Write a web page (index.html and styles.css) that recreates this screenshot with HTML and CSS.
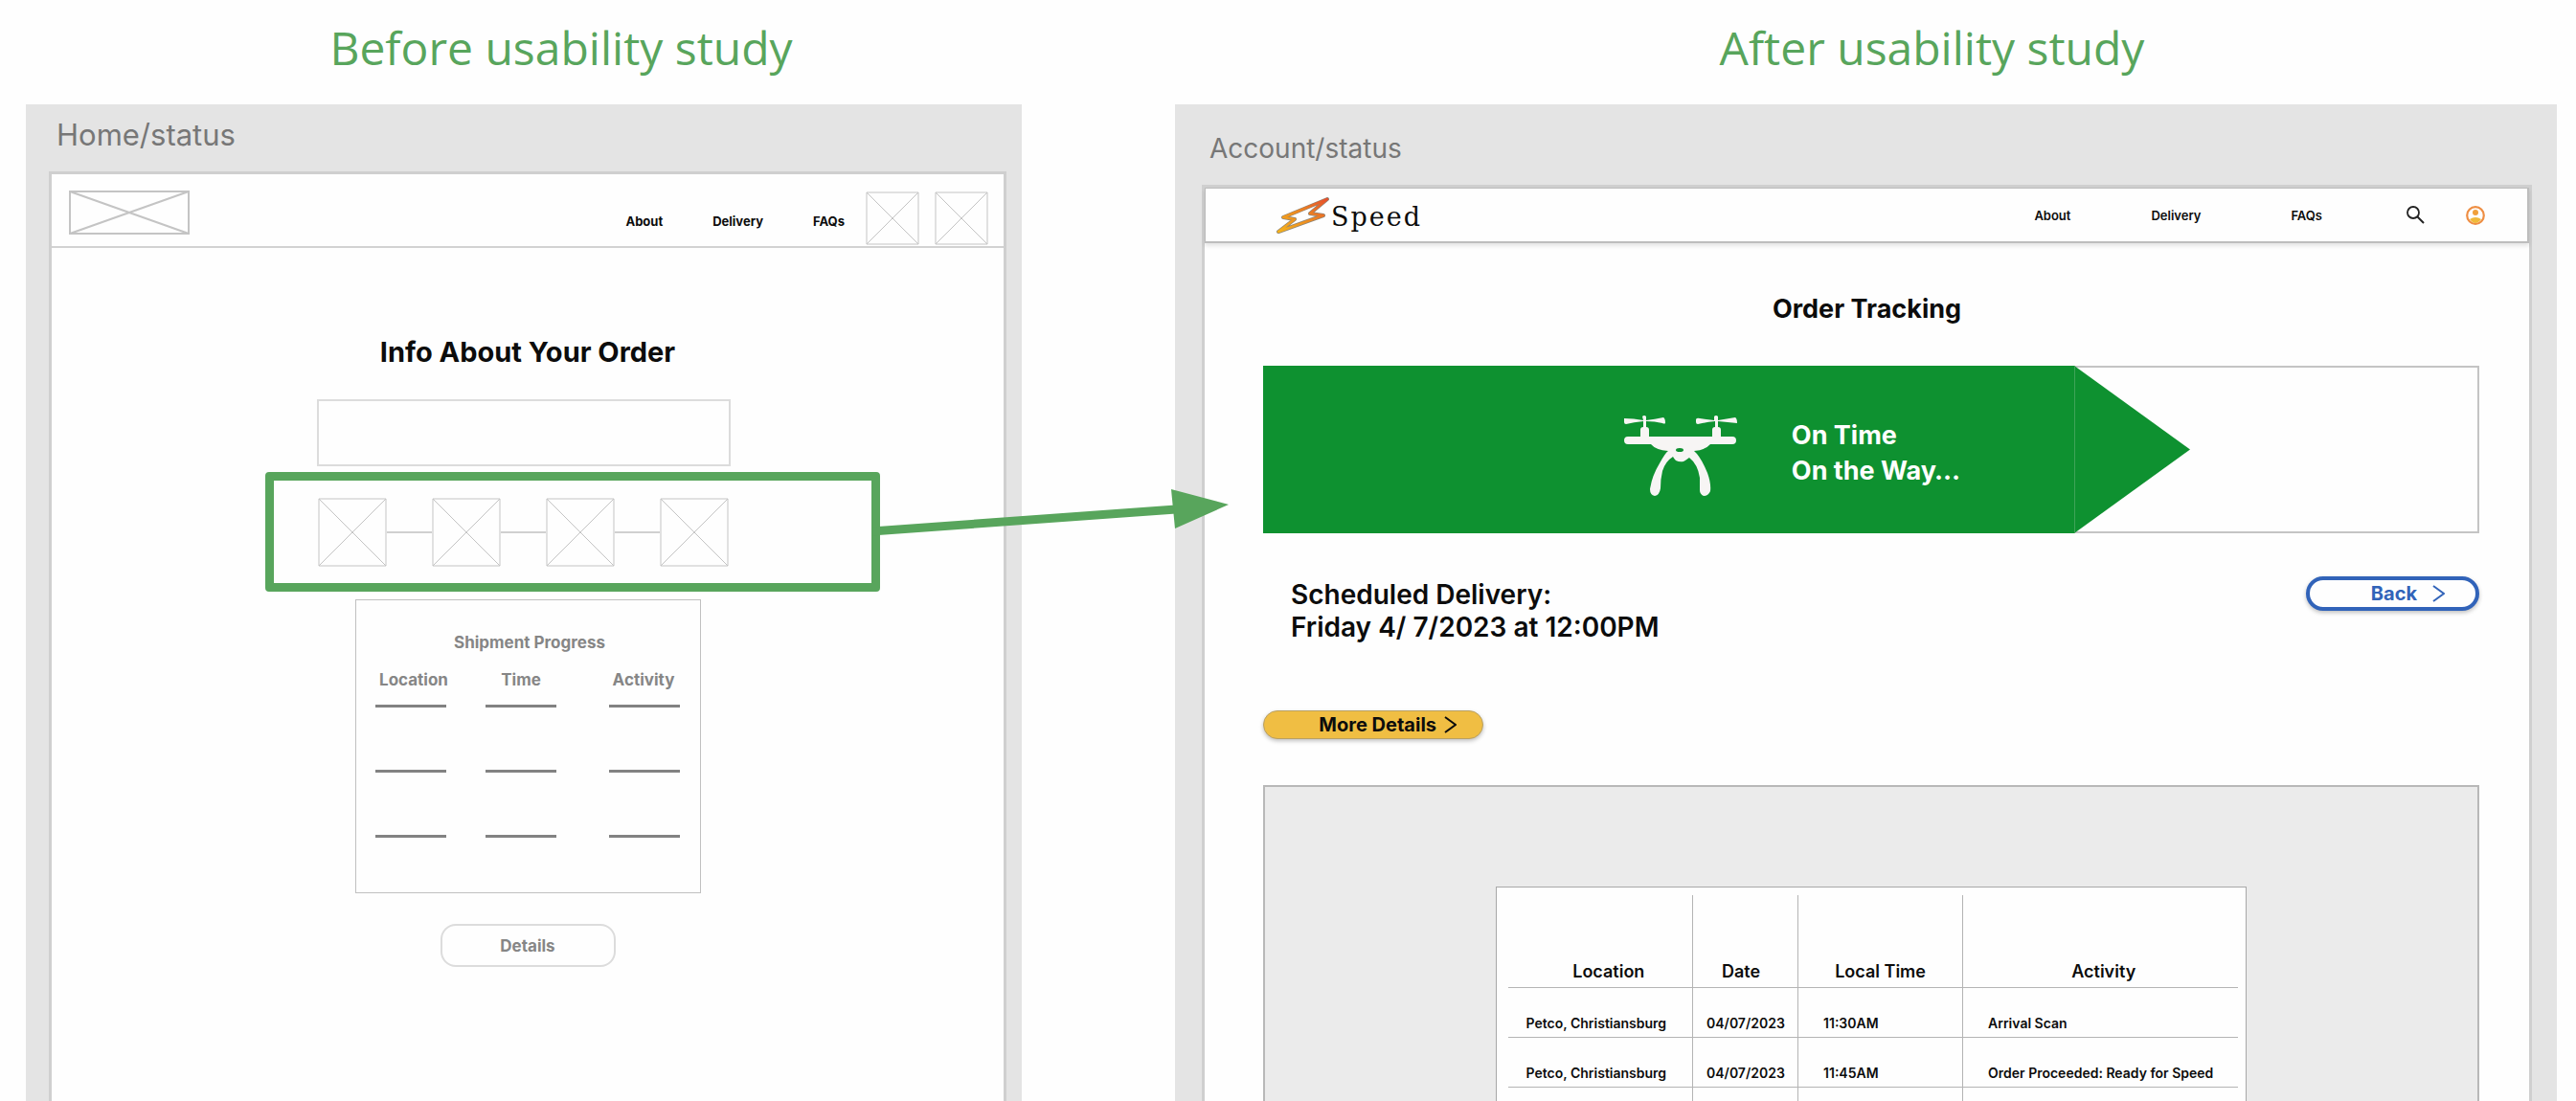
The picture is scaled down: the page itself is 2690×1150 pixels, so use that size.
FILE: index.html
```html
<!DOCTYPE html>
<html lang="en">
<head>
<meta charset="utf-8">
<title>Usability study: before and after</title>
<link rel="stylesheet" href="styles.css">
</head>
<body>
<main class="slide">
  <section class="study">
    <h1 class="study-title study-title-before">Before usability study</h1>
    <div class="panel panel-before">
      <p class="panel-label">Home/status</p>
      <div class="frame wire">
        <header class="wire-header">
          <svg class="placeholder wire-logo" viewBox="0 0 126 46" preserveAspectRatio="none"><path d="M1 1H125V45H1ZM1 1L125 45M125 1L1 45"/></svg>
          <nav class="wire-nav">
            <a href="#about">About</a>
            <a href="#delivery">Delivery</a>
            <a href="#faqs">FAQs</a>
          </nav>
          <div class="wire-icons">
            <svg class="placeholder light" viewBox="0 0 56 56"><path d="M1 1H55V55H1ZM1 1L55 55M55 1L1 55"/></svg>
            <svg class="placeholder light" viewBox="0 0 56 56"><path d="M1 1H55V55H1ZM1 1L55 55M55 1L1 55"/></svg>
          </div>
        </header>
        <h2 class="wire-title">Info About Your Order</h2>
        <div class="wire-box"></div>
        <div class="highlight">
          <svg class="placeholder light step" viewBox="0 0 72 72"><path d="M1 1H71V71H1ZM1 1L71 71M71 1L1 71"/></svg>
          <span class="link-line"></span>
          <svg class="placeholder light step" viewBox="0 0 72 72"><path d="M1 1H71V71H1ZM1 1L71 71M71 1L1 71"/></svg>
          <span class="link-line"></span>
          <svg class="placeholder light step" viewBox="0 0 72 72"><path d="M1 1H71V71H1ZM1 1L71 71M71 1L1 71"/></svg>
          <span class="link-line"></span>
          <svg class="placeholder light step" viewBox="0 0 72 72"><path d="M1 1H71V71H1ZM1 1L71 71M71 1L1 71"/></svg>
          <svg class="arrow" viewBox="0 0 376 50"><path d="M0 44L318 21" stroke="#58a55c" stroke-width="9"/><path d="M313 0L373 16L317 41Z" fill="#58a55c"/></svg>
        </div>
        <div class="shipment">
          <table class="shipment-table">
            <caption>Shipment Progress</caption>
            <thead><tr><th scope="col">Location</th><th scope="col">Time</th><th scope="col">Activity</th></tr></thead>
            <tbody>
              <tr><td><i class="bar"></i></td><td><i class="bar"></i></td><td><i class="bar"></i></td></tr>
              <tr><td><i class="bar"></i></td><td><i class="bar"></i></td><td><i class="bar"></i></td></tr>
              <tr><td><i class="bar"></i></td><td><i class="bar"></i></td><td><i class="bar"></i></td></tr>
            </tbody>
          </table>
        </div>
        <button class="wire-button" type="button">Details</button>
      </div>
    </div>
  </section>

  <section class="study">
    <h1 class="study-title study-title-after">After usability study</h1>
    <div class="panel panel-after">
      <p class="panel-label">Account/status</p>
      <div class="frame app">
        <header class="app-header">
          <a class="brand" href="#home">
            <svg class="bolt" viewBox="0 0 56 38">
              <defs><linearGradient id="bolt-fill" x1="0" y1="1" x2="1" y2="0"><stop offset="0" stop-color="#f5b21c"/><stop offset=".5" stop-color="#ee8a20"/><stop offset="1" stop-color="#e5502c"/></linearGradient></defs>
              <path d="M53 2L7 21L19 23L2 36L49 19L35 17Z" fill="none" stroke="#8e8577" stroke-width="4" stroke-linejoin="round"/>
              <path d="M53 2L7 21L19 23L2 36L49 19L35 17Z" fill="none" stroke="url(#bolt-fill)" stroke-width="2.6" stroke-linejoin="round"/>
            </svg>
            <span class="brand-name">Speed</span>
          </a>
          <nav class="app-nav">
            <a href="#about">About</a>
            <a href="#delivery">Delivery</a>
            <a class="nav-faqs" href="#faqs">FAQs</a>
          </nav>
          <button class="icon-button" type="button" aria-label="Search"><svg viewBox="0 0 20 20"><circle cx="7" cy="7" r="6" fill="none" stroke="#222" stroke-width="1.8"/><path d="M11 11L18 18" stroke="#222" stroke-width="2"/></svg></button>
          <button class="icon-button" type="button" aria-label="Account"><svg viewBox="0 0 20 20">
            <circle cx="10" cy="10" r="8.8" fill="none" stroke="#ee8e43" stroke-width="2.2"/>
            <circle cx="10" cy="7" r="3" fill="#f0a03a"/>
            <path d="M4 14Q10 10 16 14Q13 18 10 18Q7 18 4 14Z" fill="#f0b93a"/>
          </svg></button>
        </header>
        <h2 class="app-title">Order Tracking</h2>
        <div class="app-body">
          <div class="banner">
            <div class="banner-fill">
              <svg class="drone" viewBox="0 0 118 84">
                <g fill="#f7f5f4">
                  <path d="M0 3Q10 3 20 5L19 1Q21 -1 23 1L23 5Q32 4 41 2Q43 3 43 8Q42 9 40 8Q32 6 23 6V12Q26 12 26 15V22H92V15Q92 12 95 12V6Q85 7 77 9Q75 9 75 7V4Q76 2 79 3L94 5V1Q96 -1 98 1V5L116 2Q118 3 118 8L98 6V12Q101 12 101 15V22H113Q117 22 117 26Q117 30 113 30H90Q85 36 73 37Q80 43 87 60Q91 71 90 79Q88 84 83 84Q79 82 79 78V65Q77 51 68 44Q64 47 62 48Q58 49 54 47Q52 45 51 43Q43 48 40 58Q38 66 38 76Q37 83 32 84Q27 83 27 77Q29 63 37 50Q43 39 46 37Q33 36 28 30H4Q0 30 0 26Q0 22 4 22H17V15Q17 12 20 12V6Q10 7 2 9Q0 9 0 7Z"/>
                </g>
                <ellipse cx="58" cy="36" rx="4" ry="2" fill="#0e9130"/>
              </svg>
              <p class="banner-text">On Time<br>On the Way…</p>
            </div>
            <svg class="banner-tip" viewBox="0 0 121 176" preserveAspectRatio="none"><path d="M0 0L121 88L0 176Z" fill="#0e9130"/><path d="M0 0V176" stroke="#3fa358" stroke-width="2"/></svg>
          </div>
          <div class="schedule">
            <p class="schedule-text">Scheduled Delivery:<br>Friday 4/ 7/2023 at 12:00PM</p>
            <button class="back" type="button">Back <svg class="chevron" viewBox="0 0 13 18"><path d="M1 1L12 9L1 17"/></svg></button>
          </div>
          <button class="more" type="button">More Details <svg class="chevron" viewBox="0 0 13 18"><path d="M1 1L12 9L1 17"/></svg></button>
          <div class="history">
            <div class="history-card">
              <table class="history-table">
                <colgroup><col class="c-location"><col class="c-date"><col class="c-time"><col></colgroup>
                <thead><tr><th scope="col">Location</th><th scope="col">Date</th><th scope="col">Local Time</th><th scope="col">Activity</th></tr></thead>
                <tbody>
                  <tr><td>Petco, Christiansburg</td><td>04/07/2023</td><td>11:30AM</td><td>Arrival Scan</td></tr>
                  <tr><td>Petco, Christiansburg</td><td>04/07/2023</td><td>11:45AM</td><td>Order Proceeded: Ready for Speed</td></tr>
                  <tr><td></td><td></td><td></td><td></td></tr>
                </tbody>
              </table>
            </div>
          </div>
        </div>
      </div>
    </div>
  </section>
</main>
</body>
</html>
```
FILE: styles.css
```css
* { box-sizing: border-box; }

body {
  margin: 0;
  background: #fefefe;
  color: #0c0c0c;
  font-family: Inter, "Liberation Sans", sans-serif;
}

h1, h2, p { margin: 0; }

a { color: inherit; text-decoration: none; }

button {
  font-family: inherit;
  cursor: pointer;
}

.slide {
  display: grid;
  grid-template-columns: 1040fr 1443fr;
  gap: 160px;
  height: 100vh;
  padding: 0 20px 0 27px;
  overflow: hidden;
}

.study {
  display: flex;
  flex-direction: column;
  min-height: 0;
}

.study-title {
  flex: none;
  height: 109px;
  padding-top: 16px;
  color: #58a55c;
  font-family: "Open Sans", "Noto Sans", sans-serif;
  font-size: 48px;
  font-weight: 400;
  line-height: 68px;
  text-align: center;
}

.study-title-before { padding-left: 78px; }
.study-title-after { padding-left: 138px; }

.panel {
  display: flex;
  flex: 1;
  flex-direction: column;
  background: #e4e4e4;
}

.panel-before { padding: 14px 16px 0 24px; }
.panel-after { padding: 28px 26px 0 28px; }

.panel-label {
  padding: 0 8px 20px;
  color: #777;
  font-size: 31px;
  line-height: 36px;
}

.panel-after .panel-label { font-size: 28px; }

.frame {
  display: flex;
  flex: 1;
  flex-direction: column;
  border: 3px solid #cfcfcf;
  border-bottom: 0;
  background: #fefefe;
}

/* Low fidelity wireframe */

.wire { align-items: center; }

.placeholder {
  display: block;
  fill: none;
  stroke: #c4c4c4;
  stroke-width: 2;
}

.placeholder.light {
  stroke: #c4c4c4;
  stroke-width: 1;
}

.wire-header {
  display: flex;
  align-self: stretch;
  height: 77px;
  padding: 17px 16px 0 18px;
  border-bottom: 2px solid #d2d2d2;
}

.wire-logo {
  width: 126px;
  height: 46px;
}

.wire-nav {
  display: flex;
  gap: 52px;
  margin-left: auto;
  padding: 23px 22px 0 0;
  font-size: 13px;
  font-weight: 700;
  line-height: 18px;
}

.wire-icons {
  display: flex;
  gap: 16px;
  padding-top: 1px;
}

.wire-icons .placeholder {
  width: 56px;
  height: 56px;
}

.wire-title {
  margin: 91px 0 31px;
  font-size: 29px;
  font-weight: 700;
  line-height: 36px;
}

.wire-box {
  width: 432px;
  height: 70px;
  margin: 0 8px 6px 0;
  border: 2px solid #dcdcdc;
}

/* Callout round the progress steps, with the arrow to the redesign */
.highlight {
  position: relative;
  display: flex;
  align-items: center;
  width: 642px;
  height: 125px;
  margin: 0 0 8px 94px;
  padding-left: 46px;
  border: 9px solid #58a55c;
  border-radius: 4px;
}

.step {
  width: 72px;
  height: 72px;
}

.link-line {
  width: 47px;
  height: 2px;
  background: #d0d0d0;
}

.arrow {
  position: absolute;
  top: 9px;
  left: 100%;
  z-index: 1;
  width: 376px;
  height: 50px;
}

.shipment {
  width: 361px;
  height: 307px;
  margin-bottom: 32px;
  border: 1px solid #c0c0c0;
}

.shipment-table {
  width: 100%;
  border-collapse: collapse;
  table-layout: fixed;
  color: #868686;
  font-size: 17px;
  font-weight: 700;
  line-height: 24px;
}

.shipment-table caption { padding: 32px 0 15px 4px; }

.shipment-table th {
  padding: 0;
  font-weight: 700;
}

.shipment-table th:first-child { width: 115px; padding-left: 6px; }
.shipment-table th:nth-child(2) { width: 115px; }
.shipment-table th:last-child { padding-left: 12px; }

.shipment-table td {
  height: 68px;
  padding: 14px 0 0;
  vertical-align: top;
}

.shipment-table td:last-child { padding-left: 14px; }

.bar {
  display: block;
  width: 74px;
  height: 3px;
  margin: 0 auto;
  background: #828282;
}

.wire-button {
  width: 183px;
  height: 45px;
  border: 2px solid #dcdcdc;
  border-radius: 16px;
  background: #fefefe;
  color: #868686;
  font-size: 17px;
  font-weight: 700;
}

/* Redesigned page */

.app-header {
  display: flex;
  align-items: center;
  height: 58px;
  padding: 0 44px 0 74px;
  border: 1px solid #bdbdbd;
  border-width: 1px 2px 2px 1px;
  box-shadow: 0 3px 4px rgb(0 0 0 / 10%);
}

.brand {
  display: flex;
  align-items: center;
  gap: 1px;
  margin-right: auto;
}

.bolt {
  width: 56px;
  height: 38px;
}

.brand-name {
  padding-top: 4px;
  font-family: "DejaVu Serif", serif;
  font-size: 27px;
  letter-spacing: 2px;
  line-height: 32px;
}

.app-nav {
  display: flex;
  gap: 84px;
  margin-right: 88px;
  font-size: 13px;
  font-weight: 600;
  line-height: 18px;
}

.nav-faqs { margin-left: 10px; }

.icon-button {
  width: 20px;
  height: 20px;
  padding: 0;
  border: 0;
  background: none;
}

.icon-button + .icon-button { margin-left: 42px; }

.icon-button svg { display: block; width: 100%; height: 100%; }

.app-title {
  margin: 51px 0 41px;
  font-size: 27px;
  font-weight: 700;
  line-height: 36px;
  text-align: center;
}

.app-body { padding: 0 52px 0 61px; }

.banner {
  display: flex;
  height: 175px;
  box-shadow: inset 0 0 0 2px #c4c4c4;
}

.banner-fill {
  display: flex;
  align-items: center;
  justify-content: flex-end;
  gap: 57px;
  width: 66.7%;
  padding: 6px 119px 0 0;
  background: #0e9130;
}

.drone {
  width: 118px;
  height: 84px;
  margin-top: 6px;
  overflow: visible;
}

.banner-tip {
  width: 121px;
  height: 175px;
}

.banner-text {
  color: #fff;
  font-size: 27px;
  font-weight: 700;
  line-height: 37px;
}

.schedule {
  display: flex;
  align-items: flex-start;
  justify-content: space-between;
  margin: 45px 0 70px;
}

.schedule-text {
  padding: 2px 0 0 29px;
  font-size: 28px;
  font-weight: 600;
  line-height: 34px;
}

.back,
.more {
  display: flex;
  align-items: center;
  justify-content: flex-end;
  font-size: 20px;
  font-weight: 700;
  line-height: 24px;
  box-shadow: 0 2px 4px rgb(0 0 0 / 25%);
}

.back {
  gap: 16px;
  width: 181px;
  height: 36px;
  padding: 0 32px 0 0;
  border: 4px solid #3163b9;
  border-radius: 18px;
  background: #fefefe;
  color: #3163b9;
}

.more {
  gap: 8px;
  width: 230px;
  height: 30px;
  padding: 0 27px 0 0;
  border: 1px solid #b9a063;
  border-radius: 15px;
  background: #f0be43;
  color: #0c0c0c;
}

.chevron {
  width: 13px;
  height: 18px;
  fill: none;
  stroke: currentColor;
  stroke-width: 2;
}

.history {
  height: 600px;
  margin-top: 48px;
  padding: 104px 0 0;
  border: 2px solid #b8b8b8;
  background: #ebebeb;
}

.history-card {
  width: 62%;
  height: 400px;
  margin: 0 auto;
  padding: 8px 8px 0 12px;
  border: 1px solid #a8a8a8;
  background: #fefefe;
}

.history-table {
  width: 100%;
  border-collapse: collapse;
  table-layout: fixed;
}

.c-location { width: 193px; }
.c-date { width: 110px; }
.c-time { width: 172px; }

.history-table th,
.history-table td {
  border: solid #b4b4b4;
  border-width: 0 0 1px 1px;
  vertical-align: bottom;
}

.history-table th:first-child,
.history-table td:first-child { border-left: 0; }

.history-table th {
  height: 96px;
  padding: 0 0 4px;
  font-size: 18px;
  font-weight: 600;
  line-height: 24px;
}

.history-table th:first-child { padding-left: 18px; }
.history-table th:nth-child(2) { padding-right: 9px; }
.history-table th:last-child { padding-left: 6px; }

.history-table td {
  height: 52px;
  padding: 0 0 5px 26px;
  font-size: 14px;
  font-weight: 600;
  line-height: 18px;
  white-space: nowrap;
}

.history-table td:first-child { padding-left: 19px; }
.history-table td:nth-child(2) { padding-left: 14px; }
```
